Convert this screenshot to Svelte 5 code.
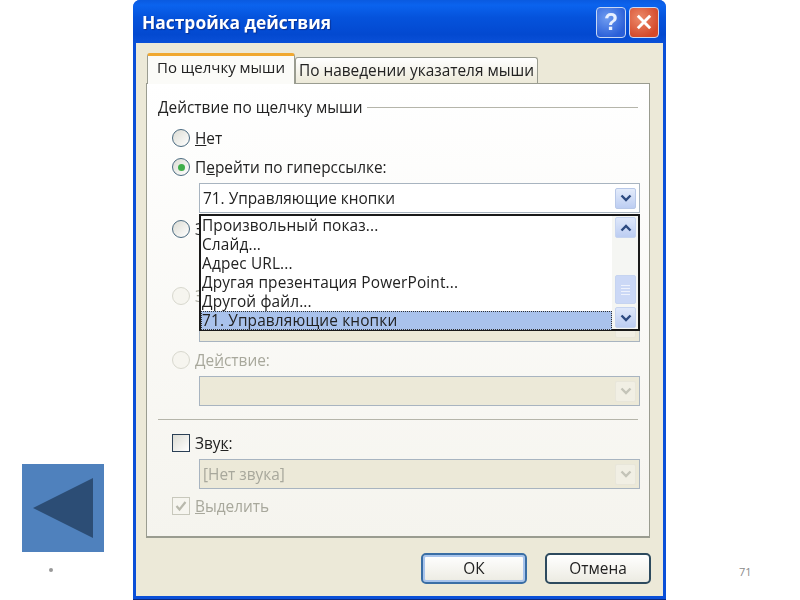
<script>
	const items = ['Произвольный показ...', 'Слайд...', 'Адрес URL...', 'Другая презентация PowerPoint...', 'Другой файл...', '71. Управляющие кнопки'];
</script>

{#snippet chevron(cls)}
	<svg class="chev {cls}" viewBox="0 0 12 8" width="12" height="8"><path d="M1.5 1.5 L6 6 L10.5 1.5" /></svg>
{/snippet}

<div class="slide">
	<div class="back"><svg viewBox="0 0 82 88" width="82" height="88"><polygon points="11,44 71,14 71,74" /></svg></div>
	<span class="dot"></span>
	<span class="num">71</span>

	<div class="dialog">
		<header class="title">
			<span class="caption">Настройка действия</span>
			<div class="winbtns">
				<span class="wb help">?</span>
				<span class="wb close"><svg viewBox="0 0 16 16" width="18" height="18"><path d="M2.5 2.5 L13.5 13.5 M13.5 2.5 L2.5 13.5" /></svg></span>
			</div>
		</header>

		<div class="body">
			<div class="tabs">
				<div class="tab active">По щелчку мыши</div>
				<div class="tab">По наведении указателя мыши</div>
			</div>
			<div class="panel">
				<div class="legend"><span>Действие по щелчку мыши</span><i></i></div>

				<label class="row first"><span class="radio"></span><span><u>Н</u>ет</span></label>
				<label class="row gap9"><span class="radio on"></span><span>П<u>е</u>рейти по гиперссылке:</span></label>
				<div class="combo-wrap">
					<div class="combo"><span>71. Управляющие кнопки</span><span class="cbtn">{@render chevron('')}</span></div>
					<div class="list">
						<div class="opts">
							{#each items as item, i}
								<div class="opt" class:sel={i === items.length - 1}>{item}</div>
							{/each}
						</div>
						<div class="sbar">
							<span class="sb">{@render chevron('up')}</span>
							<span class="thumb"><i></i><i></i><i></i><i></i></span>
							<span class="sb">{@render chevron('')}</span>
						</div>
					</div>
				</div>
				<label class="row gap6"><span class="radio"></span><span>Запуск</span></label>
				<label class="row dis gap47"><span class="radio"></span><span>Запуск</span></label>
				<div class="combo off mt6"><span></span><span class="cbtn">{@render chevron('')}</span></div>
				<label class="row dis gap8"><span class="radio"></span><span>Де<u>й</u>ствие:</span></label>
				<div class="combo off mt6"><span></span><span class="cbtn">{@render chevron('')}</span></div>

				<div class="sep"></div>

				<label class="row check-row"><span class="check"></span><span>Зву<u>к</u>:</span></label>
				<div class="combo off mt-sound"><span>[Нет звука]</span><span class="cbtn">{@render chevron('')}</span></div>
				<label class="row dis check-row2"><span class="check dim"><svg viewBox="0 0 14 14" width="14" height="14"><path d="M2.5 7 L5.5 10.5 L11.5 3" /></svg></span><span><u>В</u>ыделить</span></label>
			</div>
			<div class="actions">
				<button class="btn default">ОК</button>
				<button class="btn">Отмена</button>
			</div>
		</div>
	</div>
</div>

<style>
	:global(body) {
		margin: 0;
		background: #fff;
	}

	.slide {
		position: relative;
		width: 800px;
		height: 600px;
		overflow: hidden;
		font-family: 'Open Sans', 'DejaVu Sans', sans-serif;
	}

	.back {
		position: absolute;
		left: 22px;
		top: 464px;
		width: 82px;
		height: 88px;
		background: #4f81bd;
		filter: blur(0.4px);
	}

	.back svg {
		display: block;
	}

	.back polygon {
		fill: #2c4d75;
	}

	.dot {
		position: absolute;
		left: 49px;
		top: 568px;
		width: 4px;
		height: 4px;
		border-radius: 50%;
		background: #999;
	}

	.num {
		position: absolute;
		left: 739px;
		top: 564px;
		font-size: 11px;
		color: #8a8a8a;
	}

	.dialog {
		position: absolute;
		left: 133px;
		top: 0;
		width: 533px;
		height: 600px;
		box-sizing: border-box;
		display: flex;
		flex-direction: column;
		background: #0a4fd8;
		border-radius: 7px 7px 0 0;
		padding: 0 3px 3px;
		border-bottom: 1px solid #0a2a80;
		filter: blur(0.65px);
		font-size: 15.4px;
		color: #222;
	}

	.title {
		height: 43px;
		flex: none;
		margin: 0 -3px;
		padding: 0 7px 0 9px;
		display: flex;
		align-items: center;
		justify-content: space-between;
		border-radius: 7px 7px 0 0;
		background: linear-gradient(#0a5ae0 0, #0b63ee 12%, #0553dc 40%, #0349d0 80%, #0a50d8 100%);
	}

	.caption {
		color: #fff;
		font-weight: 700;
		font-size: 17.4px;
		text-shadow: 1px 1px 1px #0a2f90;
		font-family: 'Open Sans', sans-serif;
	}

	.winbtns {
		display: flex;
		gap: 3px;
		margin-top: 1px;
	}

	.wb {
		width: 30px;
		height: 31px;
		box-sizing: border-box;
		border: 1px solid #c8d8f4;
		border-radius: 4px;
		display: flex;
		align-items: center;
		justify-content: center;
	}

	.help {
		background: radial-gradient(circle at 35% 35%, #6f9cf0, #2a5fd8 75%);
		color: #e8f0ff;
		font: 700 23px 'Liberation Sans', sans-serif;
	}

	.close {
		background: radial-gradient(circle at 35% 35%, #ec8a6a, #d4492a 75%);
	}

	.close path {
		fill: none;
		stroke: #fff;
		stroke-width: 2.6;
	}

	.body {
		flex: 1;
		background: #ece9d8;
		padding: 10px 13px 0 10px;
		display: flex;
		flex-direction: column;
	}

	.tabs {
		display: flex;
		align-items: flex-end;
		height: 30px;
		flex: none;
		padding-left: 1px;
		position: relative;
		z-index: 1;
	}

	.tab {
		height: 26px;
		box-sizing: border-box;
		padding: 2px 2px 0;
		width: 243px;
		text-align: center;
		background: linear-gradient(#fff, #ece9d8);
		border: 1px solid #9a9c90;
		border-bottom: 0;
		border-radius: 3px 3px 0 0;
		white-space: nowrap;
	}

	.tab.active {
		width: 148px;
		height: 31px;
		margin-bottom: -1px;
		background: #fbfbf8;
		border-top: 3px solid #f0a830;
		padding-top: 1px;
		font-size: 15px;
	}

	.panel {
		height: 455px;
		box-sizing: border-box;
		background: linear-gradient(#fff, #f5f4ee);
		border: 1px solid #9a9c90;
		border-bottom: 2px solid #9a9c90;
		padding: 13px 11px 0 11px;
		display: flex;
		flex-direction: column;
	}

	.legend {
		display: flex;
		align-items: center;
		gap: 5px;
		height: 20px;
		flex: none;
		white-space: nowrap;
	}

	.legend i {
		flex: 1;
		height: 1px;
		background: #b5b5aa;
	}

	.row {
		height: 20px;
		flex: none;
		display: flex;
		align-items: center;
		gap: 5px;
		padding-left: 14px;
		white-space: nowrap;
	}

	.first {
		margin-top: 11px;
	}

	.gap9 {
		margin-top: 9px;
	}

	.gap6 {
		margin-top: 6px;
	}

	.gap47 {
		margin-top: 47px;
	}

	.gap8 {
		margin-top: 8px;
	}

	.dis {
		color: #a8a89c;
	}

	.radio {
		width: 18px;
		height: 18px;
		box-sizing: border-box;
		border: 1.5px solid #4a6a80;
		border-radius: 50%;
		background: linear-gradient(135deg, #dcdcd4, #fff);
		flex: none;
		display: flex;
		align-items: center;
		justify-content: center;
	}

	.radio.on::after {
		content: '';
		width: 7px;
		height: 7px;
		border-radius: 50%;
		background: #3fae4a;
	}

	.dis .radio {
		border-color: #d8d8ce;
		background: #f6f5ef;
	}

	.combo-wrap {
		position: relative;
		flex: none;
		margin: 6px 0 0 41px;
		width: 441px;
	}

	.combo {
		height: 30px;
		box-sizing: border-box;
		flex: none;
		background: #fff;
		border: 1px solid #a8b4c0;
		display: flex;
		align-items: center;
		justify-content: space-between;
		padding: 0 3px 0 3px;
	}

	.combo.off {
		width: 441px;
		margin-left: 41px;
		background: #ece9d8;
		color: #a8a89c;
	}

	.mt6 {
		margin-top: 6px;
	}

	.mt-sound {
		margin-top: 6px;
	}

	.cbtn {
		width: 21px;
		height: 21px;
		box-sizing: border-box;
		border: 1px solid #b8c8e8;
		border-radius: 2px;
		background: linear-gradient(#e4ecfb, #bccdf2);
		display: flex;
		align-items: center;
		justify-content: center;
	}

	.off .cbtn {
		background: #f1efe4;
		border-color: #e8e6da;
	}

	.chev {
		display: block;
	}

	.chev path {
		fill: none;
		stroke: #2c4a80;
		stroke-width: 2.4;
	}

	.off .chev path {
		stroke: #c4c4b8;
	}

	.chev.up {
		transform: rotate(180deg);
	}

	.list {
		position: absolute;
		left: 0;
		right: 0;
		top: 31px;
		height: 117px;
		box-sizing: border-box;
		z-index: 2;
		background: #fff;
		border: 2px solid #1a1a1a;
		display: flex;
	}

	.opts {
		flex: 1;
		letter-spacing: 0.15px;
	}

	.opt {
		height: 19px;
		line-height: 19px;
		padding-left: 1px;
		white-space: nowrap;
	}

	.opt.sel {
		background: #a9c2ec;
		outline: 1px dotted #333;
		outline-offset: -1px;
	}

	.sbar {
		width: 26px;
		display: flex;
		flex-direction: column;
		padding: 1px 2px 1px 3px;
		box-sizing: border-box;
		background: #f5f6f3;
	}

	.sb {
		height: 21px;
		box-sizing: border-box;
		border: 1px solid #c6d4f0;
		border-radius: 2px;
		background: linear-gradient(#dfe8fa, #bccdf2);
		display: flex;
		align-items: center;
		justify-content: center;
	}

	.sb + .thumb {
		margin-top: auto;
	}

	.thumb {
		height: 29px;
		margin-bottom: 3px;
		box-sizing: border-box;
		border: 1px solid #c6d4f0;
		border-radius: 2px;
		background: #cbd8f6;
		display: flex;
		flex-direction: column;
		align-items: center;
		justify-content: center;
		gap: 2px;
	}

	.thumb i {
		width: 9px;
		height: 1px;
		background: #eef2fc;
	}

	.sep {
		height: 1px;
		flex: none;
		margin-top: 13px;
		background: #b5b5aa;
	}

	.check-row {
		margin-top: 13px;
		gap: 5px;
	}

	.check-row2 {
		margin-top: 7px;
		gap: 5px;
	}

	.check {
		width: 18px;
		height: 18px;
		box-sizing: border-box;
		border: 1.5px solid #2a3f55;
		background: linear-gradient(135deg, #dcdcd4, #fff);
		flex: none;
	}

	.check.dim {
		border-color: #c8c8bc;
		background: #f6f5ef;
	}

	.check svg {
		display: block;
		margin: 0.5px;
	}

	.check path {
		fill: none;
		stroke: #b8b8ac;
		stroke-width: 2.2;
	}

	.actions {
		display: flex;
		justify-content: flex-end;
		gap: 18px;
		margin-top: 15px;
		margin-right: -1px;
	}

	.btn {
		width: 106px;
		height: 31px;
		font: inherit;
		color: #222;
		background: linear-gradient(#fff, #ecebe2);
		border: 2px solid #2d4a5e;
		border-radius: 5px;
		padding: 0;
	}

	.btn.default {
		border-color: #3a6ea5;
		box-shadow: inset 0 0 0 2px #a8c4ec;
	}
</style>
